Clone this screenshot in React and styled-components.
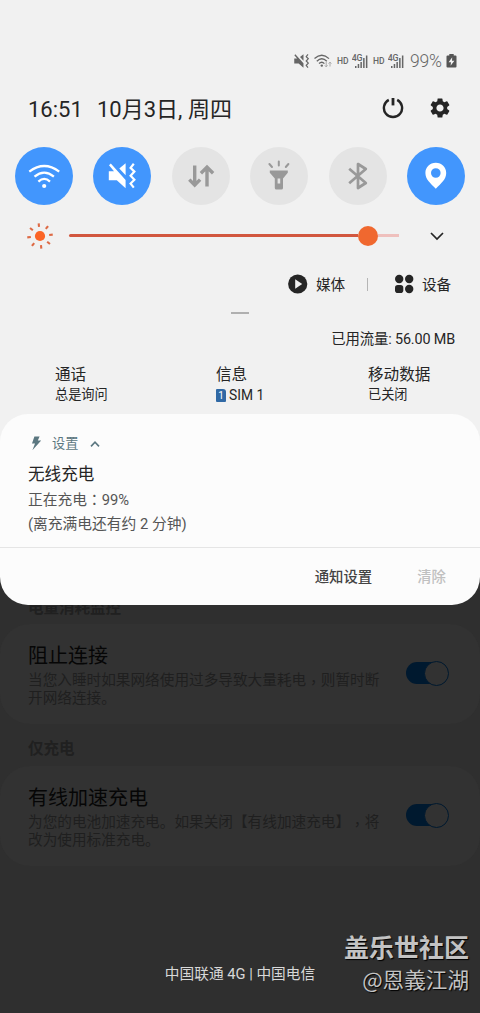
import React from 'react';
import styled, { createGlobalStyle } from 'styled-components';
import { MdSettings } from 'react-icons/md';

const GlobalStyle = createGlobalStyle`
    * {
        box-sizing: border-box;
    }

    body {
        margin: 0;
        background-color: #2f2f2f;
        font-family: Roboto, 'Noto Sans CJK SC', sans-serif;
        color: #252525;
        text-spacing-trim: space-all;
    }

    svg {
        display: block;
        flex: none;
    }
`;

const Screen = styled.div`
    position: relative;
    width: 480px;
    height: 1013px;
    overflow: hidden;
    display: flex;
    flex-direction: column;
    background-color: #2f2f2f;
    white-space: nowrap;
`;

const QuickPanel = styled.header`
    height: 414px;
    padding-top: 50px;
    background-color: #f1f1f1;
`;

const StatusBar = styled.div`
    display: flex;
    align-items: center;
    justify-content: flex-end;
    height: 22px;
    padding-right: 23px;
    color: #666;
`;

const HdLabel = styled.span`
    width: 12px;
    margin: 0 3px 0 5px;
    font-size: 8.5px;
    font-weight: 500;
    line-height: 22px;
`;

const BatteryLevel = styled.span`
    width: 32px;
    margin: 0 4px 0 6px;
    font-size: 17.5px;
    font-weight: 300;
    letter-spacing: -0.2px;
    line-height: 22px;
`;

const TitleBar = styled.div`
    display: flex;
    align-items: center;
    height: 72px;
    padding: 0 28px 0 28px;
`;

const Clock = styled.span`
    width: 69px;
    padding-top: 3px;
    font-size: 22px;
    line-height: 32px;
`;

const DateText = styled.span`
    flex: 1;
    padding-top: 3px;
    font-size: 22px;
    line-height: 32px;
`;

const TitleIcons = styled.div`
    display: flex;
    align-items: center;
    gap: 24px;
`;

const Toggles = styled.div`
    display: flex;
    justify-content: space-between;
    padding: 2.5px 15px 0;
`;

const ToggleButton = styled.div`
    width: 58px;
    height: 58px;
    border-radius: 50%;
    background-color: ${({ $on }) => ($on ? '#4296fd' : '#e4e4e4')};
    color: ${({ $on }) => ($on ? '#fff' : '#999')};
`;

const BrightnessRow = styled.div`
    display: flex;
    align-items: center;
    height: 28px;
    margin-top: 17px;
    padding: 0 35px 0 26px;
`;

const Track = styled.div`
    display: flex;
    align-items: center;
    width: 330px;
    height: 20px;
    margin: 0 30px 0 15px;
`;

const TrackFill = styled.div`
    height: 3px;
    border-radius: 2px 0 0 2px;
    background-color: #d2573f;
`;

const Thumb = styled.div`
    width: 20px;
    height: 20px;
    border-radius: 50%;
    background-color: #f0682f;
`;

const TrackRest = styled.div`
    flex: 1;
    height: 3px;
    background-color: #efc0bd;
`;

const DeviceRow = styled.div`
    display: flex;
    align-items: center;
    height: 24px;
    margin-top: 22.5px;
    padding-left: 288px;
`;

const DeviceLabel = styled.span`
    width: 30px;
    margin-left: 8px;
    padding-top: 2px;
    font-size: 14.6px;
    line-height: 24px;
`;

const DeviceDivider = styled.div`
    width: 1px;
    height: 13px;
    margin: 0 27px 0 21px;
    background-color: #b5b5b5;
`;

const Handle = styled.div`
    width: 18px;
    height: 2px;
    margin: 16px auto 0;
    background-color: #b0b0b0;
`;

const DataUsage = styled.div`
    margin-top: 15px;
    padding-right: 25px;
    text-align: right;
    font-size: 14.4px;
    letter-spacing: -0.15px;
    line-height: 22px;
`;

const SimGrid = styled.div`
    display: grid;
    grid-template-columns: 161px 152px 1fr;
    margin-top: 13px;
    padding-left: 55px;
`;

const SimTitle = styled.div`
    font-size: 15.6px;
    line-height: 22px;
`;

const SimValue = styled.div`
    display: flex;
    align-items: center;
    gap: 3px;
    height: 18px;
    font-size: 13.2px;
    line-height: 18px;
`;

const SimName = styled.span`
    font-size: 13.8px;
`;

const SimBadge = styled.span`
    width: 10px;
    height: 13px;
    border-radius: 1px 3px 1px 1px;
    background-color: #3069a5;
    color: #fff;
    font-size: 10px;
    line-height: 13px;
    text-align: center;
`;

/* the panel colour only shows behind the top corners of the card */
const NotificationArea = styled.div`
    background: linear-gradient(#f1f1f1 40px, #2f2f2f 40px);
`;

const NotificationCard = styled.section`
    height: 191px;
    border-radius: 28px;
    background-color: #fcfcfc;
    overflow: hidden;
`;

const NotificationBody = styled.div`
    height: 133px;
    padding: 19px 28px 0;
`;

const AppLine = styled.div`
    display: flex;
    align-items: center;
    height: 22px;
    padding-left: 3px;
    color: #5b7780;
    font-size: 13.2px;
    line-height: 22px;
`;

const AppName = styled.span`
    width: 27px;
    margin: 0 11px 0 10px;
`;

const NotificationTitle = styled.div`
    margin-top: 8px;
    font-size: 16.6px;
    line-height: 24px;
`;

const NotificationText = styled.div`
    margin-top: 1px;
    color: #555;
    font-size: 14.75px;
    line-height: 24px;
`;

const Wide = styled.span`
    font-family: 'Noto Sans CJK TC', sans-serif;
    line-height: 1;
`;

const Actions = styled.div`
    display: flex;
    justify-content: flex-end;
    gap: 45px;
    height: 58px;
    padding: 1px 34px 0 0;
    border-top: 1px solid #e5e5e5;
`;

const Action = styled.span`
    color: ${({ $muted }) => ($muted ? '#c0c0c0' : '#444')};
    font-size: 14.4px;
    font-weight: 500;
    line-height: 57px;
`;

const SectionLabel = styled.h2`
    height: 42px;
    margin: 0;
    padding-left: 28px;
    color: #202020;
    font-size: 15.5px;
    font-weight: 700;
    line-height: 51px;
`;

const FirstLabel = styled(SectionLabel)`
    height: 19px;
    overflow: hidden;
    line-height: 7px;
`;

const SettingCard = styled.section`
    display: flex;
    align-items: flex-start;
    height: 100px;
    padding: 19px 31px 0 28px;
    border-radius: 30px;
    background-color: #323232;
`;

const SettingText = styled.div`
    width: 378px;
`;

const SettingTitle = styled.div`
    color: #060606;
    font-size: 20px;
    line-height: 27px;
`;

const SettingDesc = styled.div`
    margin-top: 1px;
    color: #1f1f1f;
    font-size: 14.65px;
    line-height: 18px;
`;

const MidComma = styled.span`
    font-family: 'Noto Sans CJK TC', sans-serif;
    line-height: 0;
    vertical-align: -3px;
`;

const Switch = styled.div`
    display: flex;
    align-items: center;
    justify-content: flex-end;
    width: 42px;
    height: 22px;
    margin-top: 19px;
    border-radius: 11px;
    background-color: #00192f;
`;

const SwitchKnob = styled.div`
    flex: none;
    width: 25px;
    height: 25px;
    margin-right: -1px;
    border: 1px solid #00192f;
    border-radius: 50%;
    background-color: #323232;
`;

const Carrier = styled.footer`
    margin-top: 97px;
    text-align: center;
    color: #d8d8d8;
    font-size: 14.7px;
    line-height: 22px;
`;

const Watermark = styled.div`
    position: absolute;
    right: 11px;
    bottom: 18px;
    text-align: right;
    color: #c3c3c3;
    text-shadow: 1px 1px 1px #000;
    font-family: 'Noto Sans CJK SC', sans-serif;
`;

const WatermarkName = styled.div`
    font-size: 25px;
    font-weight: 700;
    line-height: 34px;
`;

const WatermarkUser = styled.div`
    font-size: 21.6px;
    line-height: 32px;
`;

const MuteGlyph = () => (
    <g>
        <path d='M15.8 24.2H21L16 18.3L17.8 16.4L32.6 33V41.2L23.8 33.2H15.8Z' fill='currentColor' />
        <path d='M26.3 21.5L32.6 16.3V28.2Z' fill='currentColor' />
        <path
            d='M40.8 16.8L37.6 20.8L41.4 24.6L37.6 28.7L41.4 32.7L37.6 36.6L40.8 40.6'
            fill='none'
            stroke='currentColor'
            strokeWidth='2.2'
        />
    </g>
);

const WifiGlyph = () => (
    <g>
        <g fill='none' stroke='currentColor' strokeWidth='2.3'>
            <path d='M14.3 24.6Q29.2 13.4 44.2 24.6' />
            <path d='M19.5 29.6Q29.2 21.6 38.9 29.6' />
            <path d='M23.4 34.6Q29.2 29.2 35 34.6' />
        </g>
        <circle cx='29.2' cy='39' r='2.1' fill='currentColor' />
    </g>
);

const DataGlyph = () => (
    <g fill='none' stroke='currentColor' strokeWidth='3.4'>
        <path d='M22.7 18.5V38M17.3 32.6L22.7 38L28.1 32.6' />
        <path d='M35 39.5V20M28.9 26.3L35 20.2L41.1 26.3' />
    </g>
);

const TorchGlyph = () => (
    <g>
        <path
            d='M28.8 14.5V18.5M19.4 17L22 20M38.4 17L35.8 20'
            stroke='currentColor'
            strokeWidth='2'
            strokeLinecap='round'
        />
        <path
            d='M19.8 23.4H37.8V25.8L33 31.6V41Q33 42.6 31.4 42.6H26.4Q24.8 42.6 24.8 41V31.6L19.8 25.8ZM27.6 31.5V36.6H30.2V31.5Z'
            fill='currentColor'
            fillRule='evenodd'
        />
    </g>
);

const BluetoothGlyph = () => (
    <path
        d='M20.2 21.8L36.8 36L29 41V17L36.8 22L20.2 36.2'
        fill='none'
        stroke='currentColor'
        strokeWidth='2.7'
        strokeLinejoin='round'
    />
);

const PinGlyph = () => (
    <path
        d='M28.8 15.8C22.8 15.8 18.4 20.2 18.4 26C18.4 32.4 23.6 36.4 28.8 41.8C34 36.4 39.2 32.4 39.2 26C39.2 20.2 34.8 15.8 28.8 15.8ZM28.8 21.2A4.8 4.8 0 1 1 28.8 30.8A4.8 4.8 0 1 1 28.8 21.2Z'
        fill='currentColor'
        fillRule='evenodd'
    />
);

const toggles = [
    { id: 'wifi', on: true, Glyph: WifiGlyph },
    { id: 'mute', on: true, Glyph: MuteGlyph },
    { id: 'data', on: false, Glyph: DataGlyph },
    { id: 'torch', on: false, Glyph: TorchGlyph },
    { id: 'bluetooth', on: false, Glyph: BluetoothGlyph },
    { id: 'location', on: true, Glyph: PinGlyph },
];

const SignalIcon = () => (
    <svg width='16' height='14' viewBox='0 0 16 14' fill='currentColor'>
        <text x='-0.2' y='6.8' fontSize='8.8' fontWeight='500' letterSpacing='-0.4'>
            4G
        </text>
        <rect x='3' y='12' width='1.5' height='2' />
        <rect x='5.7' y='10' width='1.5' height='4' />
        <rect x='8.4' y='8' width='1.5' height='6' />
        <rect x='11.1' y='4' width='1.5' height='10' />
        <rect x='13.9' y='1.5' width='1.5' height='12.5' />
    </svg>
);

const StatusWifiIcon = () => (
    <svg width='18' height='14' viewBox='0 0 18 14' fill='none' stroke='currentColor' strokeWidth='1.3'>
        <path d='M0.5 4.6Q7.8 -2.2 15 4.6' />
        <path d='M2.8 7.2Q7.8 2.4 12.8 7.2' />
        <path d='M5 9.6Q7.8 7 10.4 9.6' />
        <circle cx='7.8' cy='11.6' r='1.2' fill='currentColor' stroke='none' />
        <path d='M12.2 8V12.8M10.8 11.4L12.2 12.9L13.6 11.4M16 12.5V8M14.6 9.6L16 8.1L17.4 9.6' stroke='#aaa' strokeWidth='1' />
    </svg>
);

const SunIcon = () => (
    <svg width='28' height='28' viewBox='0 0 28 28'>
        <circle cx='14' cy='14' r='5.1' fill='#fb6527' />
        <g stroke='#dd6a45' strokeWidth='2.1'>
            {[0, 45, 90, 135, 180, 225, 270, 315].map(deg => (
                <path key={deg} d='M14 1.2V4.8' transform={`rotate(${deg - 6} 14 14)`} />
            ))}
        </g>
    </svg>
);

const PowerIcon = () => (
    <svg width='22' height='22' viewBox='0 0 22 22' fill='none' stroke='#252525'>
        <path d='M6.8 2.9A9.1 9.1 0 1 0 15.2 2.9' strokeWidth='2.4' />
        <path d='M11 1V8.4' strokeWidth='2.8' />
    </svg>
);

const Setting = ({ title, children }) => (
    <SettingCard>
        <SettingText>
            <SettingTitle>{title}</SettingTitle>
            <SettingDesc>{children}</SettingDesc>
        </SettingText>
        <Switch>
            <SwitchKnob />
        </Switch>
    </SettingCard>
);

const App = () => {
    const brightness = 289;

    return (
        <Screen>
            <GlobalStyle />
            <QuickPanel>
                <StatusBar>
                    <svg width='15' height='14' viewBox='15.5 16 27 25.5'>
                        <MuteGlyph />
                    </svg>
                    <svg width='5' height='1' />
                    <StatusWifiIcon />
                    <HdLabel>HD</HdLabel>
                    <SignalIcon />
                    <HdLabel>HD</HdLabel>
                    <SignalIcon />
                    <BatteryLevel>99%</BatteryLevel>
                    <svg width='11' height='14' viewBox='0 0 11 14'>
                        <path d='M3.3 0H7.7V1.5H9.5Q10.5 1.5 10.5 2.5V12.6Q10.5 13.6 9.5 13.6H1.5Q0.5 13.6 0.5 12.6V2.5Q0.5 1.5 1.5 1.5H3.3Z' fill='#555' />
                        <path d='M6.2 3.2L2.6 8.2H5L4.6 11.8L8.4 6.8H6Z' fill='#f1f1f1' />
                    </svg>
                </StatusBar>

                <TitleBar>
                    <Clock>16:51</Clock>
                    <DateText>10月3日, 周四</DateText>
                    <TitleIcons>
                        <PowerIcon />
                        <MdSettings size={24} />
                    </TitleIcons>
                </TitleBar>

                <Toggles>
                    {toggles.map(({ id, on, Glyph }) => (
                        <ToggleButton key={id} $on={on}>
                            <svg width='58' height='58' viewBox='0 0 58 58'>
                                <Glyph />
                            </svg>
                        </ToggleButton>
                    ))}
                </Toggles>

                <BrightnessRow>
                    <SunIcon />
                    <Track>
                        <TrackFill style={{ width: brightness }} />
                        <Thumb />
                        <TrackRest />
                    </Track>
                    <svg width='16' height='10' viewBox='0 0 16 10'>
                        <path d='M2 2L8 8L14 2' fill='none' stroke='#252525' strokeWidth='1.7' />
                    </svg>
                </BrightnessRow>

                <DeviceRow>
                    <svg width='20' height='20' viewBox='0 0 20 20'>
                        <circle cx='9.7' cy='10' r='9.6' fill='#252525' />
                        <path d='M7.2 5.2L14.2 10L7.2 14.8Z' fill='#f1f1f1' />
                    </svg>
                    <DeviceLabel>媒体</DeviceLabel>
                    <DeviceDivider />
                    <svg width='19' height='20' viewBox='0 0 19 20' fill='#252525'>
                        <circle cx='4.2' cy='5' r='4.2' />
                        <circle cx='14.2' cy='5' r='4.2' />
                        <rect x='0' y='10.9' width='8.3' height='8.2' rx='2.8' />
                        <circle cx='14.2' cy='15' r='4.2' />
                    </svg>
                    <DeviceLabel>设备</DeviceLabel>
                </DeviceRow>
                <Handle />

                <DataUsage>已用流量: 56.00 MB</DataUsage>
                <SimGrid>
                    <div>
                        <SimTitle>通话</SimTitle>
                        <SimValue>总是询问</SimValue>
                    </div>
                    <div>
                        <SimTitle>信息</SimTitle>
                        <SimValue>
                            <SimBadge>1</SimBadge>
                            <SimName>SIM 1</SimName>
                        </SimValue>
                    </div>
                    <div>
                        <SimTitle>移动数据</SimTitle>
                        <SimValue>已关闭</SimValue>
                    </div>
                </SimGrid>
            </QuickPanel>

            <NotificationArea>
                <NotificationCard>
                    <NotificationBody>
                        <AppLine>
                            <svg width='11' height='16' viewBox='0 0 11 16'>
                                <path d='M3.4 0.5H8.6L6.8 4.6H10.2L1.4 14.2L4 7.6H1Z' fill='currentColor' />
                            </svg>
                            <AppName>设置</AppName>
                            <svg width='10' height='8' viewBox='0 0 10 8'>
                                <path d='M1 6.4L5 2.2L9 6.4' fill='none' stroke='currentColor' strokeWidth='1.6' />
                            </svg>
                        </AppLine>
                        <NotificationTitle>无线充电</NotificationTitle>
                        <NotificationText>
                            正在充电<Wide>：</Wide>99%
                            <br />
                            (离充满电还有约 2 分钟)
                        </NotificationText>
                    </NotificationBody>
                    <Actions>
                        <Action>通知设置</Action>
                        <Action $muted>清除</Action>
                    </Actions>
                </NotificationCard>
            </NotificationArea>

            <FirstLabel>电量消耗监控</FirstLabel>
            <Setting title='阻止连接'>
                当您入睡时如果网络使用过多导致大量耗电<MidComma>，</MidComma>则暂时断
                <br />
                开网络连接。
            </Setting>
            <SectionLabel>仅充电</SectionLabel>
            <Setting title='有线加速充电'>
                为您的电池加速充电。如果关闭【有线加速充电】<MidComma>，</MidComma>将
                <br />
                改为使用标准充电。
            </Setting>

            <Carrier>中国联通 4G | 中国电信</Carrier>
            <Watermark>
                <WatermarkName>盖乐世社区</WatermarkName>
                <WatermarkUser>@恩義江湖</WatermarkUser>
            </Watermark>
        </Screen>
    );
};

export default App;
